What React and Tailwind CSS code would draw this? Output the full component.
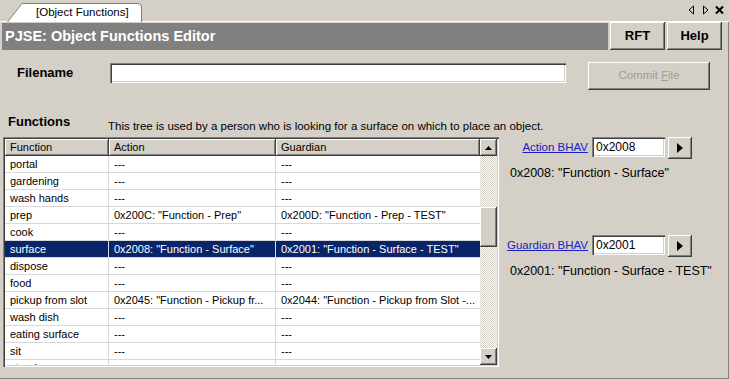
import React from 'react';

const raised =
  'shadow-[inset_-1px_-1px_#404040,inset_1px_1px_#ffffff,inset_-2px_-2px_#808080,inset_2px_2px_#d4d0c8]';
const sunken =
  'shadow-[inset_1px_1px_#808080,inset_2px_2px_#404040,inset_-1px_-1px_#ffffff,inset_-2px_-2px_#d4d0c8]';

const rows = [
  ['portal', '---', '---'],
  ['gardening', '---', '---'],
  ['wash hands', '---', '---'],
  ['prep', '0x200C: "Function - Prep"', '0x200D: "Function - Prep - TEST"'],
  ['cook', '---', '---'],
  ['surface', '0x2008: "Function - Surface"', '0x2001: "Function - Surface - TEST"'],
  ['dispose', '---', '---'],
  ['food', '---', '---'],
  ['pickup from slot', '0x2045: "Function - Pickup fr...', '0x2044: "Function - Pickup from Slot -...'],
  ['wash dish', '---', '---'],
  ['eating surface', '---', '---'],
  ['sit', '---', '---'],
  ['stand', '---', '---'],
];

function Tab() {
  return (
    <div className="relative ml-[7px] mt-[3px] w-[135px] h-[19px]">
      <svg className="absolute inset-0" width="135" height="19" viewBox="0 0 135 19">
        <path d="M0.5 19 L15 0.5 L131 0.5 Q134.5 0.5 134.5 4 L134.5 19" fill="#ffffff" stroke="#808080" />
      </svg>
      <span className="relative block pl-[29px] pt-[2px] text-[11.5px] leading-[15px] text-black">
        [Object Functions]
      </span>
    </div>
  );
}

function RowButton({ label }) {
  return (
    <div className={`w-[55px] h-[28px] bg-[#d4d0c8] flex items-center justify-center text-[13px] font-bold text-black ${raised}`}>
      {label}
    </div>
  );
}

function BhavRow({ label, value }) {
  return (
    <div className="flex items-start">
      <div className="w-[89px] pt-[3px] text-right text-[11.5px] leading-[14px] text-[#2020c0] underline">{label}</div>
      <div className={`ml-[4px] w-[73px] h-[20px] bg-white pl-[4px] pt-[3px] text-[12px] leading-[14px] text-black ${sunken}`}>
        {value}
      </div>
      <div className={`ml-[3px] w-[24px] h-[22px] bg-[#d4d0c8] flex items-center justify-center ${raised}`}>
        <svg width="8" height="10" viewBox="0 0 8 10">
          <path d="M1 0 L7 5 L1 10 Z" fill="#000" />
        </svg>
      </div>
    </div>
  );
}

export default function App() {
  return (
    <div
      className="w-[729px] h-[379px] bg-[#d4d0c8] flex flex-col overflow-hidden text-black"
      style={{ fontFamily: '"Liberation Sans", Arial, sans-serif' }}
    >
      {/* TAB STRIP */}
      <div className="h-[22px] flex items-start border-b border-[#ffffff]">
        <Tab />
        <div className="flex-1" />
        <div className="flex items-center gap-[5px] mt-[5px] mr-[5px]">
          <svg width="9" height="10" viewBox="0 0 9 10">
            <path d="M6.5 1 L2 5 L6.5 9 Z" fill="none" stroke="#000" />
          </svg>
          <svg width="9" height="10" viewBox="0 0 9 10">
            <path d="M2.5 1 L7 5 L2.5 9 Z" fill="none" stroke="#000" />
          </svg>
          <svg width="9" height="10" viewBox="0 0 9 10">
            <path d="M1 1.5 L8 8.5 M8 1.5 L1 8.5" stroke="#000" strokeWidth="2" />
          </svg>
        </div>
      </div>

      <div className="flex-1 flex flex-col border-r border-b border-[#808080]">
        {/* TITLE BAR */}
        <div className="flex items-start gap-[2px] pl-[2px] pr-[6px]">
          <div className="flex-1 h-[27px] mt-[1px] bg-[#808080] pl-[3px] flex items-center text-[14.5px] font-bold text-white">
            PJSE: Object Functions Editor
          </div>
          <RowButton label="RFT" />
          <RowButton label="Help" />
        </div>

        {/* FILENAME */}
        <div className="flex items-start mt-[12px]">
          <div className="w-[110px] pl-[17px] pt-[3px] text-[13px] leading-[16px] font-bold">Filename</div>
          <div className={`mt-[1px] w-[456px] h-[20px] bg-white ${sunken}`} />
          <div className={`ml-[22px] w-[122px] h-[28px] bg-[#d4d0c8] flex items-center justify-center text-[11.5px] text-[#a09c94] ${raised}`}>
            Commit <span className="ml-[3px] underline">F</span>ile
          </div>
        </div>

        {/* FUNCTIONS LABEL */}
        <div className="flex items-start mt-[24px]">
          <div className="w-[108px] pl-[8px] text-[13px] font-bold leading-[16px]">Functions</div>
          <div className="mt-[5px] text-[11.5px] leading-[14px]">
            This tree is used by a person who is looking for a surface on which to place an object.
          </div>
        </div>

        {/* TABLE + BHAV PANEL */}
        <div className="flex items-start mt-[4px]">
          <div className={`ml-[3px] w-[496px] h-[230px] bg-white p-[2px] flex ${sunken}`}>
            <div className="flex-1 flex flex-col overflow-hidden">
              <div className="flex h-[17px] shrink-0 text-[11px]">
                <div className={`w-[104px] pl-[5px] flex items-center bg-[#d4d0c8] ${raised}`}>Function</div>
                <div className={`w-[167px] pl-[5px] flex items-center bg-[#d4d0c8] ${raised}`}>Action</div>
                <div className={`flex-1 pl-[5px] flex items-center bg-[#d4d0c8] ${raised}`}>Guardian</div>
              </div>
              {rows.map((r, i) => {
                const sel = r[0] === 'surface';
                return (
                  <div
                    key={i}
                    className={`flex h-[17px] shrink-0 text-[11px] border-b border-[#d8d8d8] ${sel ? 'bg-[#0a246a] text-white' : ''}`}
                  >
                    <div className="w-[104px] pl-[5px] flex items-center border-r border-[#d8d8d8] whitespace-nowrap overflow-hidden">{r[0]}</div>
                    <div className="w-[167px] pl-[5px] flex items-center border-r border-[#d8d8d8] whitespace-nowrap overflow-hidden">{r[1]}</div>
                    <div className="flex-1 pl-[5px] flex items-center whitespace-nowrap overflow-hidden">{r[2]}</div>
                  </div>
                );
              })}
            </div>
            {/* SCROLLBAR */}
            <div className="w-[17px] flex flex-col bg-[image:repeating-conic-gradient(#d4d0c8_0_25%,#ffffff_0_50%)] bg-size-[2px_2px]">
              <div className={`h-[17px] bg-[#d4d0c8] flex items-center justify-center ${raised}`}>
                <svg width="7" height="4" viewBox="0 0 7 4"><path d="M3.5 0 L7 4 L0 4 Z" fill="#000" /></svg>
              </div>
              <div className="h-[51px]" />
              <div className={`h-[40px] bg-[#d4d0c8] ${raised}`} />
              <div className="flex-1" />
              <div className={`h-[17px] bg-[#d4d0c8] flex items-center justify-center ${raised}`}>
                <svg width="7" height="4" viewBox="0 0 7 4"><path d="M0 0 L7 0 L3.5 4 Z" fill="#000" /></svg>
              </div>
            </div>
          </div>

          <div className="flex-1 flex flex-col">
            <BhavRow label="Action BHAV" value="0x2008" />
            <div className="mt-[7px] pl-[11px] text-[12.5px] leading-[14px]">0x2008: "Function - Surface"</div>
            <div className="mt-[55px]">
              <BhavRow label="Guardian BHAV" value="0x2001" />
            </div>
            <div className="mt-[7px] pl-[11px] text-[12.5px] leading-[14px]">0x2001: "Function - Surface - TEST"</div>
          </div>
        </div>
      </div>
    </div>
  );
}
